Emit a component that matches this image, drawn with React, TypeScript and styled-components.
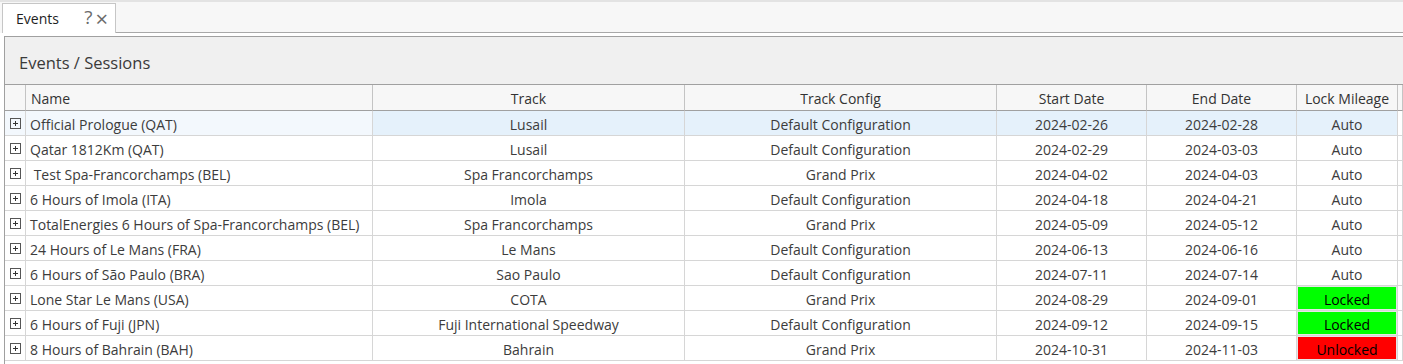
import React from "react";
import styled, { createGlobalStyle } from "styled-components";

const GlobalStyle = createGlobalStyle`
    body {
        margin: 0;
        background: #ffffff;
        font-family: "Open Sans", "Noto Sans", sans-serif;
    }
`;

const Screen = styled.div`
    width: 1403px;
    height: 364px;
    overflow: hidden;
    background: #f7f7f7;
    border-top: 2px solid #e3e3e3;
    box-sizing: border-box;
    display: flex;
    flex-direction: column;
`;

const TabStrip = styled.div`
    height: 31px;
    display: flex;
    align-items: flex-end;
    box-sizing: border-box;
    flex-shrink: 0;
`;

const Tab = styled.div`
    margin-left: 2px;
    width: 114px;
    height: 30px;
    box-sizing: border-box;
    background: #ffffff;
    border: 1px solid #c6c6c6;
    border-bottom: none;
    display: flex;
    align-items: center;
    padding-left: 13px;
    padding-right: 7px;
    font-size: 14px;
    color: #1e1e1e;
`;

const TabTitle = styled.span`
    flex: 1;
`;

const TabButton = styled.span<{ $size: number }>`
    color: #6b6b6b;
    font-size: ${p => p.$size}px;
    margin-left: 3px;
    line-height: 1;
    margin-top: -2px;
`;

const TabLine = styled.div`
    flex: 1;
    height: 100%;
    border-bottom: 1px solid #a8a8a8;
    box-sizing: border-box;
`;

const Body = styled.div`
    flex: 1;
    background: #ffffff;
    padding: 3px 0 0 4px;
    display: flex;
`;

const Panel = styled.div`
    flex: 1;
    background: #f0f0f0;
    border-left: 1px solid #a0a0a0;
    border-top: 1px solid #a0a0a0;
    display: flex;
    flex-direction: column;
`;

const PanelTitle = styled.div`
    height: 48px;
    box-sizing: border-box;
    padding: 14px 0 0 14px;
    font-size: 16.5px;
    color: #3a3a3a;
    border-bottom: 1px solid #a0a0a0;
`;

const Grid = styled.div`
    display: grid;
    grid-template-columns: 21px 347px 312px 312px 150px 150px 101px 1fr;
    background: #ffffff;
    flex: 1;
    align-content: start;
`;

const HeaderCell = styled.div<{ $left?: boolean }>`
    height: 26px;
    box-sizing: border-box;
    background: #f7f7f7;
    border-right: 1px solid #c4c4c4;
    border-bottom: 1px solid #a0a0a0;
    display: flex;
    align-items: center;
    justify-content: ${p => (p.$left ? "flex-start" : "center")};
    padding-left: ${p => (p.$left ? "5px" : "0")};
    padding-top: 2px;
    font-size: 14px;
    color: #333333;
    white-space: nowrap;
`;

const Cell = styled.div<{ $left?: boolean; $bg?: string }>`
    height: 25px;
    box-sizing: border-box;
    background: ${p => p.$bg || "#ffffff"};
    border-right: 1px solid #d6d6d6;
    border-bottom: 1px solid #d6d6d6;
    display: flex;
    align-items: center;
    justify-content: ${p => (p.$left ? "flex-start" : "center")};
    padding-left: ${p => (p.$left ? "4px" : "0")};
    font-size: 14px;
    color: #3c3c3c;
    white-space: pre;
    overflow: hidden;
`;

const CellText = styled.span`
    padding-top: 2px;
`;

const LockBadge = styled.div<{ $state: "auto" | "locked" | "unlocked" }>`
    width: 100%;
    height: 100%;
    box-sizing: border-box;
    display: flex;
    align-items: center;
    justify-content: center;
    padding-top: 2px;
    color: ${p => (p.$state === "auto" ? "#3c3c3c" : "#000000")};
    background: ${p =>
        p.$state === "locked" ? "#00ff00" : p.$state === "unlocked" ? "#ff0000" : "transparent"};
    border: ${p => (p.$state === "auto" ? "none" : "1px solid #e6e6e6")};
`;

const Expander = styled.span`
    width: 9px;
    height: 9px;
    border: 1px solid #555555;
    position: relative;
    margin-left: 1px;
    margin-top: 1px;

    &::before,
    &::after {
        content: "";
        position: absolute;
        background: #333333;
    }
    &::before {
        left: 2px;
        top: 4px;
        width: 5px;
        height: 1px;
    }
    &::after {
        left: 4px;
        top: 2px;
        width: 1px;
        height: 5px;
    }
`;

interface EventRow {
    name: string;
    track: string;
    config: string;
    start: string;
    end: string;
    lock: "auto" | "locked" | "unlocked";
}

const events: EventRow[] = [
    { name: "Official Prologue (QAT)", track: "Lusail", config: "Default Configuration", start: "2024-02-26", end: "2024-02-28", lock: "auto" },
    { name: "Qatar 1812Km (QAT)", track: "Lusail", config: "Default Configuration", start: "2024-02-29", end: "2024-03-03", lock: "auto" },
    { name: " Test Spa-Francorchamps (BEL)", track: "Spa Francorchamps", config: "Grand Prix", start: "2024-04-02", end: "2024-04-03", lock: "auto" },
    { name: "6 Hours of Imola (ITA)", track: "Imola", config: "Default Configuration", start: "2024-04-18", end: "2024-04-21", lock: "auto" },
    { name: "TotalEnergies 6 Hours of Spa-Francorchamps (BEL)", track: "Spa Francorchamps", config: "Grand Prix", start: "2024-05-09", end: "2024-05-12", lock: "auto" },
    { name: "24 Hours of Le Mans (FRA)", track: "Le Mans", config: "Default Configuration", start: "2024-06-13", end: "2024-06-16", lock: "auto" },
    { name: "6 Hours of São Paulo (BRA)", track: "Sao Paulo", config: "Default Configuration", start: "2024-07-11", end: "2024-07-14", lock: "auto" },
    { name: "Lone Star Le Mans (USA)", track: "COTA", config: "Grand Prix", start: "2024-08-29", end: "2024-09-01", lock: "locked" },
    { name: "6 Hours of Fuji (JPN)", track: "Fuji International Speedway", config: "Default Configuration", start: "2024-09-12", end: "2024-09-15", lock: "locked" },
    { name: "8 Hours of Bahrain (BAH)", track: "Bahrain", config: "Grand Prix", start: "2024-10-31", end: "2024-11-03", lock: "unlocked" },
];

const lockText = { auto: "Auto", locked: "Locked", unlocked: "Unlocked" };

export default function App(): JSX.Element {
    return <Screen>
        <GlobalStyle />
        <TabStrip>
            <Tab>
                <TabTitle>Events</TabTitle>
                <TabButton $size={19}>?</TabButton>
                <TabButton $size={22}>×</TabButton>
            </Tab>
            <TabLine />
        </TabStrip>
        <Body>
            <Panel>
                <PanelTitle>Events / Sessions</PanelTitle>
                <Grid>
                    <HeaderCell />
                    <HeaderCell $left>Name</HeaderCell>
                    <HeaderCell>Track</HeaderCell>
                    <HeaderCell>Track Config</HeaderCell>
                    <HeaderCell>Start Date</HeaderCell>
                    <HeaderCell>End Date</HeaderCell>
                    <HeaderCell>Lock Mileage</HeaderCell>
                    <HeaderCell />
                    {events.map((ev, index) => {
                        // first row is the hovered / selected one
                        const soft = index === 0 ? "#f3f8fd" : undefined;
                        const sel = index === 0 ? "#e5f1fb" : undefined;
                        return <React.Fragment key={index}>
                            <Cell $bg={soft}><Expander /></Cell>
                            <Cell $left $bg={soft}><CellText>{ev.name}</CellText></Cell>
                            <Cell $bg={sel}><CellText>{ev.track}</CellText></Cell>
                            <Cell $bg={sel}><CellText>{ev.config}</CellText></Cell>
                            <Cell $bg={sel}><CellText>{ev.start}</CellText></Cell>
                            <Cell $bg={sel}><CellText>{ev.end}</CellText></Cell>
                            <Cell $bg={sel}>
                                <LockBadge $state={ev.lock}>{lockText[ev.lock]}</LockBadge>
                            </Cell>
                            <Cell />
                        </React.Fragment>;
                    })}
                </Grid>
            </Panel>
        </Body>
    </Screen>;
}
